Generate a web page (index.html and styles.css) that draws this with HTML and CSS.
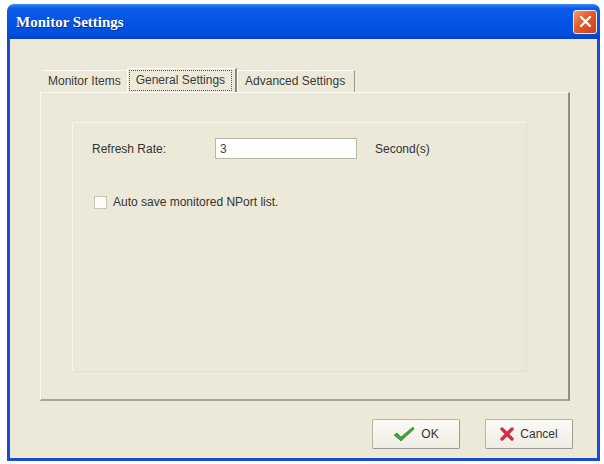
FILE: index.html
```html
<!DOCTYPE html>
<html>
<head>
  <title>Monitor Settings</title>
  <link rel="stylesheet" href="styles.css">
</head>
<body>
  <div class="window">
    <div class="titlebar">
      <span class="title">Monitor Settings</span>
      <div class="close">
        <svg width="15" height="15" viewBox="0 0 15 15">
          <path d="M3 3 L12 12 M12 3 L3 12" stroke="#fff" stroke-width="2.4" stroke-linecap="round"/>
        </svg>
      </div>
    </div>

    <div class="content">
      <div class="tabs">
        <div class="tab">Monitor Items</div>
        <div class="tab active"><span class="focus">General Settings</span></div>
        <div class="tab wide">Advanced Settings</div>
      </div>

      <div class="panel">
        <div class="group">
          <div class="row">
            <span class="label">Refresh Rate:</span>
            <input type="text" class="field" value="3">
            <span class="unit">Second(s)</span>
          </div>
          <div class="check">
            <span class="box"></span>
            <span>Auto save monitored NPort list.</span>
          </div>
        </div>
      </div>

      <div class="buttons">
        <div class="btn">
          <svg width="22" height="16" viewBox="0 0 22 16">
            <path d="M1 9 L4 7 L8 11 L20 1 L21 3 L8 15 Z" fill="#3fa33a" stroke="#2c7d2a" stroke-width="0.6"/>
          </svg>
          <span>OK</span>
        </div>
        <div class="btn">
          <svg width="14" height="14" viewBox="0 0 14 14">
            <path d="M2 2 L12 12 M12 2 L2 12" stroke="#d0304a" stroke-width="3.4" stroke-linecap="round"/>
          </svg>
          <span>Cancel</span>
        </div>
      </div>
    </div>
  </div>
</body>
</html>
```

FILE: styles.css
```css
body {
  margin: 0;
  background: #fff;
  font-family: "Liberation Sans", Arial, sans-serif;
  font-size: 12px;
  color: #222;
}

.window {
  margin: 4px 0 0 7px;
  width: 593px;
  border-radius: 7px 7px 0 0;
  overflow: hidden;
}

.titlebar {
  height: 35px;
  display: flex;
  align-items: center;
  justify-content: space-between;
  padding: 0 3px 0 9px;
  background: linear-gradient(to bottom, #3d8af7 0%, #0a5ce8 12%, #0654e6 50%, #0350dd 85%, #0a3fc4 100%);
}

.title {
  font-family: "Liberation Serif", "Times New Roman", serif;
  font-weight: bold;
  font-size: 15px;
  color: #fff;
  text-shadow: 1px 1px 0 #0b2c8a;
  padding-top: 2px;
}

.close {
  width: 22px;
  height: 22px;
  border: 1px solid #f4e9e4;
  border-radius: 3px;
  background: linear-gradient(135deg, #f29b70 0%, #e2592c 45%, #c8411a 100%);
  display: flex;
  align-items: center;
  justify-content: center;
}

/* dialog body under the title bar */
.content {
  background: #ece9d8;
  border: 3px solid #1a4bd6;
  border-top: none;
  height: 422px;
  padding: 29px 24px 0 30px;
  box-sizing: border-box;
  display: flex;
  flex-direction: column;
}

.tabs {
  display: flex;
  align-items: flex-end;
  height: 24px;
  padding-left: 2px;
}

.tab {
  height: 22px;
  line-height: 21px;
  padding: 0 6px;
  border-top: 1px solid #fbfaf4;
  border-left: 1px solid #fbfaf4;
  border-right: 1px solid #9a988c;
  box-sizing: border-box;
  color: #3a3a3a;
}

.tab:first-child {
  border-right: none;
  border-left: none;
}

.tab.wide {
  padding: 0 9px 0 7px;
}

.tab.active {
  height: 24px;
  padding: 1px 3px 1px 1px;
  border-right: 2px solid #8a887c;
}

.focus {
  display: block;
  height: 21px;
  line-height: 19px;
  padding: 0 6px;
  border: 1px dotted #555;
  box-sizing: border-box;
}

.panel {
  width: 530px;
  height: 309px;
  box-sizing: border-box;
  border-top: 1px solid #fbfaf4;
  border-left: 1px solid #fbfaf4;
  border-right: 2px solid #8f8d81;
  border-bottom: 2px solid #a7a598;
  padding: 29px 0 0 31px;
}

.group {
  width: 455px;
  height: 250px;
  box-sizing: border-box;
  border: 1px solid #f6f4ea;
  border-right-color: #e2dfd0;
  border-bottom-color: #e4e1d2;
  padding: 15px 0 0 19px;
}

.row {
  display: flex;
  align-items: center;
}

.label {
  width: 123px;
  color: #333;
}

.field {
  width: 142px;
  height: 21px;
  box-sizing: border-box;
  border: 1px solid #b9b7a8;
  background: #fff;
  font-family: inherit;
  font-size: 12px;
  color: #444;
  padding: 0 4px;
  margin: 0;
}

.unit {
  margin-left: 18px;
  color: #333;
}

.check {
  display: flex;
  align-items: center;
  margin-top: 36px;
  margin-left: 2px;
  color: #333;
}

.box {
  width: 13px;
  height: 13px;
  box-sizing: border-box;
  border: 1px solid #c9c6b6;
  background: #fcfcf8;
  margin-right: 6px;
}

.buttons {
  display: flex;
  justify-content: flex-end;
  gap: 25px;
  margin-top: 18px;
}

.btn {
  width: 88px;
  height: 30px;
  box-sizing: border-box;
  border: 1px solid #b8b5a6;
  border-right-color: #9c9a8e;
  border-bottom-color: #9c9a8e;
  border-radius: 2px;
  background: linear-gradient(to bottom, #fbfbf7, #efede2);
  display: flex;
  align-items: center;
  justify-content: center;
  gap: 6px;
  color: #333;
  font-size: 12px;
}
```
